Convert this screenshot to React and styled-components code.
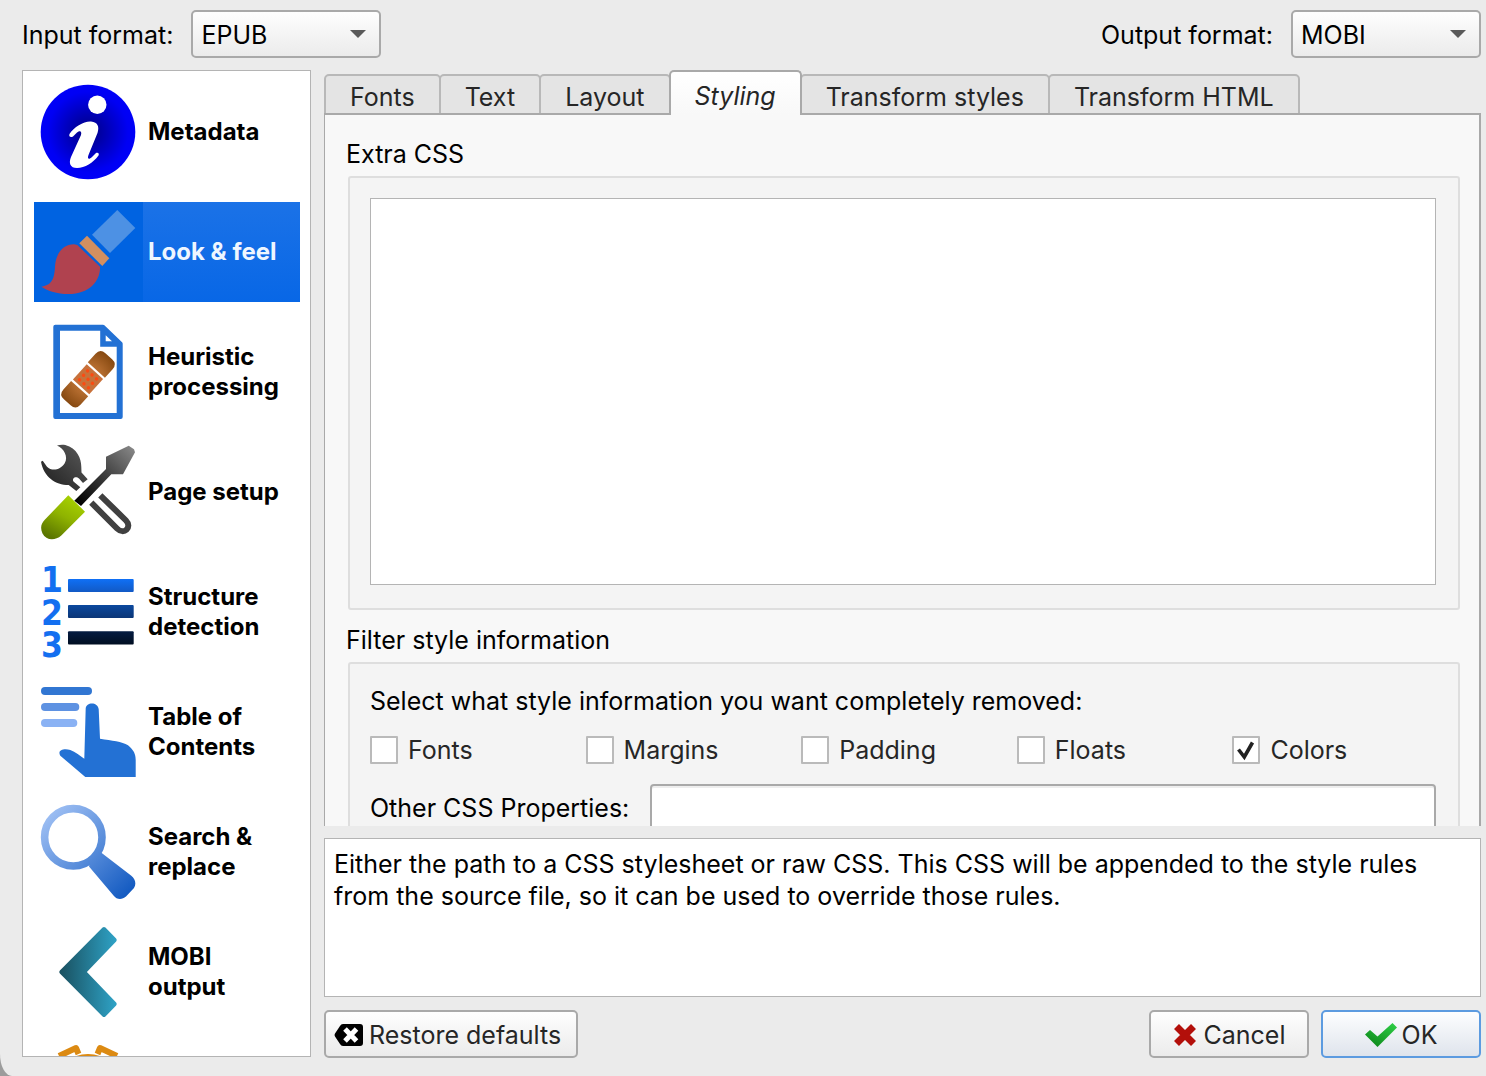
import React, { useState } from 'react';
import styled, { createGlobalStyle, css } from 'styled-components';

const GlobalStyle = createGlobalStyle`
    * {
        box-sizing: border-box;
    }

    body {
        margin: 0;
        background-color: #9c9c9c;
        font-family: Inter, "Liberation Sans", sans-serif;
        font-size: 25px;
        color: #000;
    }

    button, input, select, textarea {
        font: inherit;
        color: inherit;
    }
`;

const MetadataIcon = () => (
    <Icon viewBox="0 0 96 96">
        <defs>
            <radialGradient id="info" cx="0.5" cy="0.5" r="0.5">
                <stop offset="0" stopColor="#000080" />
                <stop offset="0.85" stopColor="#0000f4" />
                <stop offset="1" stopColor="#0000f8" />
            </radialGradient>
        </defs>
        <circle cx="48" cy="48" r="47.3" fill="url(#info)" />
        <circle cx="57.3" cy="20.8" r="9.2" fill="#fff" />
        <path
            d="M29.500 50 C34 43 44 37 51 37.500 C58 38 59.500 43 57.500 49 L48.500 71 C47 75 49 76 52 73 L56 69 C58 68 59.500 69.500 58.500 71.500 C53 79 45 84 37 84 C30 84 28.500 79 31 73 L41 51 C42 47 40 46 37 48.500 L33 52.500 C30.500 54 28.500 52.500 29.500 50 Z"
            fill="#fff"
        />
    </Icon>
);

const BrushIcon = () => (
    <Icon viewBox="0 0 96 96">
        <path d="M77.300 6 L95.300 24 L70 49 L52 30.700 Z" fill="#4d91e4" />
        <path d="M47 31.700 L69.300 54.300 L62.300 62 L39.300 39.300 Z" fill="#d28f60" />
        <path
            d="M1.300 82.700 C10 81 14.300 77.700 15 62.700 C15.700 49.300 23.300 40.300 34 40.300 L37.300 41 L60 62.700 C60.700 76 50 90 28.300 90 C17 90 8 87 1.300 82.700 Z"
            fill="#b0424f"
        />
    </Icon>
);

const dots = [[-6, -6], [0, -6], [6, -6], [-6, 0], [0, 0], [6, 0], [-6, 6], [0, 6], [6, 6]];

const HeuristicIcon = () => (
    <Icon viewBox="0 0 96 96">
        <defs>
            <radialGradient id="plaster" gradientUnits="userSpaceOnUse" cx="0" cy="0" r="32">
                <stop offset="0" stopColor="#d07a3c" />
                <stop offset="0.5" stopColor="#b0692c" />
                <stop offset="1" stopColor="#84470f" />
            </radialGradient>
        </defs>
        <path
            d="M15.300 2.700 H63 L80.700 19.700 V93 H15.300 Z M20 6.700 V89 H76.700 V22.700 H60.200 V6.700 Z M65.700 11.300 L72 17.300 H65.700 Z"
            fill="#2371d4"
            fillRule="evenodd"
        />
        <path d="M15.300 2.700 H63 L80.700 19.700 V93 H15.300 Z" fill="none" stroke="#2371d4" strokeWidth="4" strokeLinejoin="round" />
        <g transform="translate(48 55.300) rotate(-48)">
            <path d="M-12.500 -11.500 H-24 Q-31 -11.500 -31 -4.500 V4.500 Q-31 11.500 -24 11.500 H-12.500 Z" fill="url(#plaster)" />
            <path d="M12.500 -11.500 H24 Q31 -11.500 31 -4.500 V4.500 Q31 11.500 24 11.500 H12.500 Z" fill="url(#plaster)" />
            <rect x="-10.300" y="-11" width="20.600" height="22" fill="#c8713a" />
            {dots.map(([x, y]) => (
                <circle key={`${x} ${y}`} cx={x} cy={y} r="1.700" fill="#fb4a12" />
            ))}
        </g>
    </Icon>
);

const ToolsIcon = () => (
    <Icon viewBox="0 0 96 96">
        <defs>
            <linearGradient id="wrench" x1="1" y1="0" x2="0" y2="1">
                <stop offset="0" stopColor="#5c5c5c" />
                <stop offset="1" stopColor="#1c1c1c" />
            </linearGradient>
            <linearGradient id="driver" gradientUnits="userSpaceOnUse" x1="92" y1="4" x2="38" y2="60">
                <stop offset="0" stopColor="#858585" />
                <stop offset="0.5" stopColor="#3c3c3c" />
                <stop offset="1" stopColor="#000" />
            </linearGradient>
            <linearGradient id="grip" x1="0.8" y1="0.1" x2="0.3" y2="1">
                <stop offset="0" stopColor="#a6d000" />
                <stop offset="0.45" stopColor="#8fb300" />
                <stop offset="1" stopColor="#5b7600" />
            </linearGradient>
        </defs>
        <path
            d="M17 1.500 C20 .5 23 .5 25.300 1 C37 4.300 41.300 14.300 41.300 22.700 L41.500 28.500 L47.700 35.300 L43 39 L39 34.500 C36 31.500 31.500 34 33.500 37.500 L40.300 43.300 L36.300 47 L28.700 41 C15.300 41 3.700 32.700 1 17.700 L2.700 16.700 L7 22.700 C12 27.700 20.300 26 24.700 19.300 C28.700 12.700 23.700 4.300 17 1.500 Z"
            fill="url(#wrench)"
        />
        <path d="M51.300 58.700 L77 84.500 C84 91.500 92.500 83 86 76.500 L60.300 51.300" fill="none" stroke="#404040" strokeWidth="6" />
        <path
            d="M34.300 56.700 L41 62 L71.300 30.300 H83 L95 8.300 L94 5.300 L88.700 1.700 L66 12.700 V25 Z"
            fill="url(#driver)"
        />
        <path d="M28.300 51.300 L45 67.700 L21.300 91.500 C15 97 6 96.500 2.500 89.500 C0 84 1 79.500 5 75.500 Z" fill="url(#grip)" />
    </Icon>
);

const StructureIcon = () => (
    <Icon viewBox="0 0 96 96">
        <defs>
            <linearGradient id="bars" gradientUnits="userSpaceOnUse" x1="0" y1="15" x2="0" y2="81">
                <stop offset="0" stopColor="#0f70f6" />
                <stop offset="0.2" stopColor="#1259c4" />
                <stop offset="0.4" stopColor="#0b489d" />
                <stop offset="0.6" stopColor="#0b3575" />
                <stop offset="0.8" stopColor="#041b40" />
                <stop offset="1" stopColor="#000d20" />
            </linearGradient>
        </defs>
        <rect x="28" y="15" width="65.700" height="13" rx="1" fill="url(#bars)" />
        <rect x="28" y="41" width="65.700" height="13" rx="1" fill="url(#bars)" />
        <rect x="28" y="67.300" width="65.700" height="13.300" rx="1" fill="url(#bars)" />
        <Digit x="12" y="28">1</Digit>
        <Digit x="12" y="61">2</Digit>
        <Digit x="12" y="93">3</Digit>
    </Icon>
);

const ContentsIcon = () => (
    <Icon viewBox="0 0 96 96">
        <rect x="1" y="3" width="51" height="8" rx="4" fill="#3176d2" />
        <rect x="1" y="19" width="38.300" height="8" rx="4" fill="#5e92e2" />
        <rect x="1" y="35" width="36.300" height="8" rx="4" fill="#8ab2f4" />
        <path
            d="M45.700 24.300 C46.300 17.700 58 17.700 58.700 25.300 L60 54.700 C72 56.700 82 57.300 88 61.300 C93.700 66 95.700 70 95.700 76 V93 H45.300 L20.300 71.700 C17 66 23.700 64.300 30.300 66 C35.300 67.700 40.300 72 44.300 74.700 Z"
            fill="#2371d4"
        />
    </Icon>
);

const SearchIcon = () => (
    <Icon viewBox="0 0 96 96">
        <defs>
            <linearGradient id="lens" gradientUnits="userSpaceOnUse" x1="6" y1="6" x2="90" y2="92">
                <stop offset="0" stopColor="#a2c2f5" />
                <stop offset="0.5" stopColor="#5a8edb" />
                <stop offset="1" stopColor="#1058c0" />
            </linearGradient>
        </defs>
        <circle cx="33.300" cy="33.300" r="28.700" fill="none" stroke="url(#lens)" strokeWidth="7.600" />
        <path
            d="M49 62.500 L51 54 L56 47 L61.700 49 L91 71.500 C95.500 75 96.500 80 94 84 L86 92.500 C82 96 77 96 73.500 91.500 Z"
            fill="url(#lens)"
        />
    </Icon>
);

const OutputIcon = () => (
    <Icon viewBox="0 0 96 96">
        <defs>
            <linearGradient id="chevron" x1="0" y1="0" x2="1" y2="0">
                <stop offset="0" stopColor="#1a5262" />
                <stop offset="1" stopColor="#2ea0c3" />
            </linearGradient>
        </defs>
        <path
            d="M64 5 L74.700 16 L44 48 L74.700 80 L64 91 L21.300 48 Z"
            fill="url(#chevron)"
            stroke="url(#chevron)"
            strokeWidth="4"
            strokeLinejoin="round"
        />
    </Icon>
);

const DebugIcon = () => (
    <Icon viewBox="0 0 96 96">
        <g fill="none" stroke="#dc8a12" strokeWidth="6">
            <path d="M19 12 L36 4 L38.500 10" strokeLinejoin="round" />
            <path d="M77 12 L60 4 L57.500 10" strokeLinejoin="round" />
            <circle cx="48" cy="44" r="31" />
        </g>
    </Icon>
);

const sections = [
    { name: 'Metadata', icon: MetadataIcon },
    { name: 'Look & feel', icon: BrushIcon },
    { name: 'Heuristic processing', icon: HeuristicIcon },
    { name: 'Page setup', icon: ToolsIcon },
    { name: 'Structure detection', icon: StructureIcon },
    { name: 'Table of Contents', icon: ContentsIcon },
    { name: 'Search & replace', icon: SearchIcon },
    { name: 'MOBI output', icon: OutputIcon },
    { name: 'Debug', icon: DebugIcon }
];

const tabs = ['Fonts', 'Text', 'Layout', 'Styling', 'Transform styles', 'Transform HTML'];

const filters = ['Fonts', 'Margins', 'Padding', 'Floats', 'Colors'];

const FormatSelect = ({ id, label, options }) => (
    <FormatField>
        <label htmlFor={id}>{label}</label>
        <SelectBox>
            <Select id={id}>
                {options.map(option => <option key={option}>{option}</option>)}
            </Select>
            <Arrow viewBox="0 0 16 8"><path d="M0 0 H16 L8 8 Z" fill="#5a5a5a" /></Arrow>
        </SelectBox>
    </FormatField>
);

const FilterOption = ({ name, checked, onChange }) => (
    <CheckLabel>
        <CheckBox>
            <input type="checkbox" checked={checked} onChange={onChange} />
            {checked && (
                <svg viewBox="0 0 28 28">
                    <path d="M6.500 13.500 L12.300 21 L20.500 6.500" fill="none" stroke="#222" strokeWidth="3.600" />
                </svg>
            )}
        </CheckBox>
        {name}
    </CheckLabel>
);

const App = () => {
    const [section, setSection] = useState('Look & feel');
    const [tab, setTab] = useState('Styling');
    const [removed, setRemoved] = useState(['Colors']);

    const toggle = name => setRemoved(
        removed.includes(name) ? removed.filter(item => item !== name) : [...removed, name]
    );

    return (
        <Window>
            <GlobalStyle />
            <Header>
                <FormatSelect id="input-format" label="Input format:" options={['EPUB']} />
                <FormatSelect id="output-format" label="Output format:" options={['MOBI']} />
            </Header>
            <Body>
                <Sidebar>
                    {sections.map(({ name, icon: SectionIcon }) => (
                        <SectionButton key={name} type="button" $selected={name === section} onClick={() => setSection(name)}>
                            <IconCell><SectionIcon /></IconCell>
                            <SectionName>{name}</SectionName>
                        </SectionButton>
                    ))}
                </Sidebar>
                <Main>
                    <TabBar role="tablist">
                        {tabs.map(name => (
                            <Tab
                                key={name}
                                type="button"
                                role="tab"
                                aria-selected={name === tab}
                                $active={name === tab}
                                onClick={() => setTab(name)}
                            >
                                {name}
                            </Tab>
                        ))}
                    </TabBar>
                    <Panel>
                        <GroupTitle as="label" htmlFor="extra-css">Extra CSS</GroupTitle>
                        <Group>
                            <CssEditor id="extra-css" />
                        </Group>
                        <GroupTitle $spaced>Filter style information</GroupTitle>
                        <Group>
                            <Hint>Select what style information you want completely removed:</Hint>
                            <Filters>
                                {filters.map(name => (
                                    <FilterOption
                                        key={name}
                                        name={name}
                                        checked={removed.includes(name)}
                                        onChange={() => toggle(name)}
                                    />
                                ))}
                            </Filters>
                            <PropertyRow>
                                <label htmlFor="other-css">Other CSS Properties:</label>
                                <PropertyInput id="other-css" type="text" />
                            </PropertyRow>
                        </Group>
                    </Panel>
                    <Help>
                        Either the path to a CSS stylesheet or raw CSS. This CSS will be appended to the style rules
                        from the source file, so it can be used to override those rules.
                    </Help>
                    <Footer>
                        <RestoreButton type="button">
                            <svg width="30" height="24" viewBox="0 0 30 24">
                                <path d="M9 1 H26 Q29 1 29 4 V20 Q29 23 26 23 H9 Q7 23 6 21 L1 13.500 Q0 12 1 10.500 L6 3 Q7 1 9 1 Z" fill="#000" />
                                <path d="M11 6 L22.500 18 M22.500 6 L11 18" stroke="#fff" strokeWidth="5" />
                            </svg>
                            Restore defaults
                        </RestoreButton>
                        <Actions>
                            <Button type="button">
                                <svg width="24" height="24" viewBox="0 0 24 24">
                                    <path d="M3.500 3.500 L20.500 20.500 M20.500 3.500 L3.500 20.500" stroke="#b30f0a" strokeWidth="7" />
                                </svg>
                                Cancel
                            </Button>
                            <Button type="button" $primary>
                                <svg width="32" height="24" viewBox="0 0 32 24">
                                    <defs>
                                        <linearGradient id="tick" x1="1" y1="0" x2="0.3" y2="1">
                                            <stop offset="0" stopColor="#2fd148" />
                                            <stop offset="1" stopColor="#0f8a1c" />
                                        </linearGradient>
                                    </defs>
                                    <path d="M0 11.500 L5 7 L12.500 13.500 L27.500 0 L32 4.500 L12.500 24 Z" fill="url(#tick)" />
                                </svg>
                                OK
                            </Button>
                        </Actions>
                    </Footer>
                </Main>
            </Body>
        </Window>
    );
};

const Window = styled.div`
    display: flex;
    flex-direction: column;
    gap: 12px;
    height: 100vh;
    padding: 10px 5px 18px 22px;
    background-color: #ebebeb;
    border-bottom-left-radius: 12px 22px;
`;

const Header = styled.header`
    display: flex;
    justify-content: space-between;
`;

const FormatField = styled.div`
    display: flex;
    align-items: center;
    gap: 18px;

    label {
        padding-top: 2px;
    }
`;

const SelectBox = styled.div`
    position: relative;
`;

const raised = css`
    border: 2px solid #a9a9a9;
    border-radius: 5px;
    background: linear-gradient(#fefefe, #ebebeb);
`;

const Select = styled.select`
    ${raised}
    appearance: none;
    width: 190px;
    height: 48px;
    padding: 2px 32px 0 8px;
`;

const Arrow = styled.svg`
    position: absolute;
    top: 20px;
    right: 15px;
    width: 16px;
    height: 8px;
    pointer-events: none;
`;

const Body = styled.div`
    display: flex;
    flex: 1;
    gap: 13px;
    min-height: 0;
`;

const Sidebar = styled.nav`
    display: flex;
    flex-direction: column;
    flex: none;
    gap: 20px;
    width: 289px;
    margin-bottom: 1px;
    padding: 11px 10px 0 11px;
    border: 1px solid #b4b4b4;
    background-color: #fff;
    overflow: hidden;
`;

const SectionButton = styled.button`
    display: flex;
    flex: none;
    align-items: stretch;
    height: 100px;
    padding: 0;
    border: none;
    background: none;
    text-align: left;

    ${props =>
        props.$selected && css`
            background: linear-gradient(#1b72e7, #0867e6);
            color: #eef6ff;

            ${IconCell} {
                background-color: #0063e1;
            }
        `}
`;

const IconCell = styled.span`
    display: flex;
    flex: none;
    align-items: center;
    width: 109px;
    padding-left: 6px;
`;

const Icon = styled.svg`
    width: 96px;
    height: 96px;
`;

const Digit = styled.text`
    fill: #136ff0;
    font-family: "DejaVu Sans Condensed", "DejaVu Sans", sans-serif;
    font-size: 35px;
    font-weight: 700;
    text-anchor: middle;
`;

const SectionName = styled.span`
    align-self: center;
    padding: 0 16px 0 5px;
    font-size: 24px;
    font-weight: 700;
    line-height: 30px;
`;

const Main = styled.main`
    display: flex;
    flex: 1;
    flex-direction: column;
    min-width: 0;
`;

const TabBar = styled.div`
    display: flex;
    flex: none;
    align-items: flex-end;
    height: 45px;
    margin-bottom: -2px;
`;

const Tab = styled.button`
    height: 41px;
    padding: 4px 24px 0;
    border: 2px solid #b8b8b8;
    border-radius: 5px 5px 0 0;
    background-color: #e4e4e4;
    color: #262626;
    white-space: nowrap;

    & + & {
        margin-left: -2px;
    }

    ${props =>
        props.$active && css`
            position: relative;
            z-index: 1;
            height: 45px;
            border-color: #a9a9a9;
            border-bottom: none;
            background: linear-gradient(#fff, #f8f8f8);
            font-style: italic;
        `}
`;

const Panel = styled.section`
    display: flex;
    flex: 1;
    flex-direction: column;
    min-height: 0;
    padding: 24px 19px 0 21px;
    border: solid #a9a9a9;
    border-width: 2px 2px 0 1px;
    background-color: #f8f8f8;
    overflow: hidden;
`;

const GroupTitle = styled.div`
    flex: none;
    margin-top: ${props => (props.$spaced ? '15px' : '0')};
    margin-bottom: 7px;
    line-height: 30px;
`;

const Group = styled.div`
    flex: none;
    margin-left: 2px;
    padding: 20px 22px 23px 20px;
    border: 2px solid #dedede;
    border-radius: 3px;
    background-color: #f4f4f4;
`;

const CssEditor = styled.textarea`
    display: block;
    width: 100%;
    height: 387px;
    border: 1px solid #b4b4b4;
    background-color: #fff;
    outline: none;
    resize: none;
`;

const Hint = styled.p`
    margin: 2px 0 20px;
    line-height: 30px;
`;

const Filters = styled.div`
    display: grid;
    grid-template-columns: repeat(5, 1fr);
    gap: 12px;
`;

const CheckLabel = styled.label`
    display: flex;
    align-items: center;
    gap: 10px;
    height: 28px;
    color: #262626;
`;

const CheckBox = styled.span`
    display: grid;
    width: 28px;
    height: 28px;

    input, svg {
        grid-area: 1 / 1;
        width: 28px;
        height: 28px;
        margin: 0;
    }

    svg {
        pointer-events: none;
    }

    input {
        appearance: none;
        border: 2px solid #bababa;
        border-radius: 1px;
        background-color: #fff;
    }
`;

const PropertyRow = styled.div`
    display: flex;
    align-items: center;
    gap: 21px;
    margin-top: 20px;
`;

const PropertyInput = styled.input`
    flex: 1;
    min-width: 0;
    height: 48px;
    padding: 0 8px;
    border: 2px solid #a9a9a9;
    border-radius: 4px;
    background-color: #fff;
    box-shadow: inset 0 2px 0 #eee;
    outline: none;
`;

const Help = styled.p`
    flex: none;
    height: 159px;
    margin: 12px 0 13px;
    padding: 9px;
    border: 1px solid #b4b4b4;
    background-color: #fff;
    line-height: 32px;
`;

const Footer = styled.footer`
    display: flex;
    flex: none;
    justify-content: space-between;
`;

const Actions = styled.div`
    display: flex;
    gap: 12px;
`;

const Button = styled.button`
    ${raised}
    display: flex;
    align-items: center;
    justify-content: center;
    gap: 7px;
    min-width: 160px;
    height: 48px;
    padding: 2px 8px 0;
    color: #262626;

    ${props =>
        props.$primary && css`
            gap: 5px;
            border-color: #5c9be0;
            background: linear-gradient(#fdfeff, #dfe4ec);
        `}
`;

const RestoreButton = styled(Button)`
    justify-content: flex-start;
    gap: 5px;
    min-width: 254px;
`;

export default App;
